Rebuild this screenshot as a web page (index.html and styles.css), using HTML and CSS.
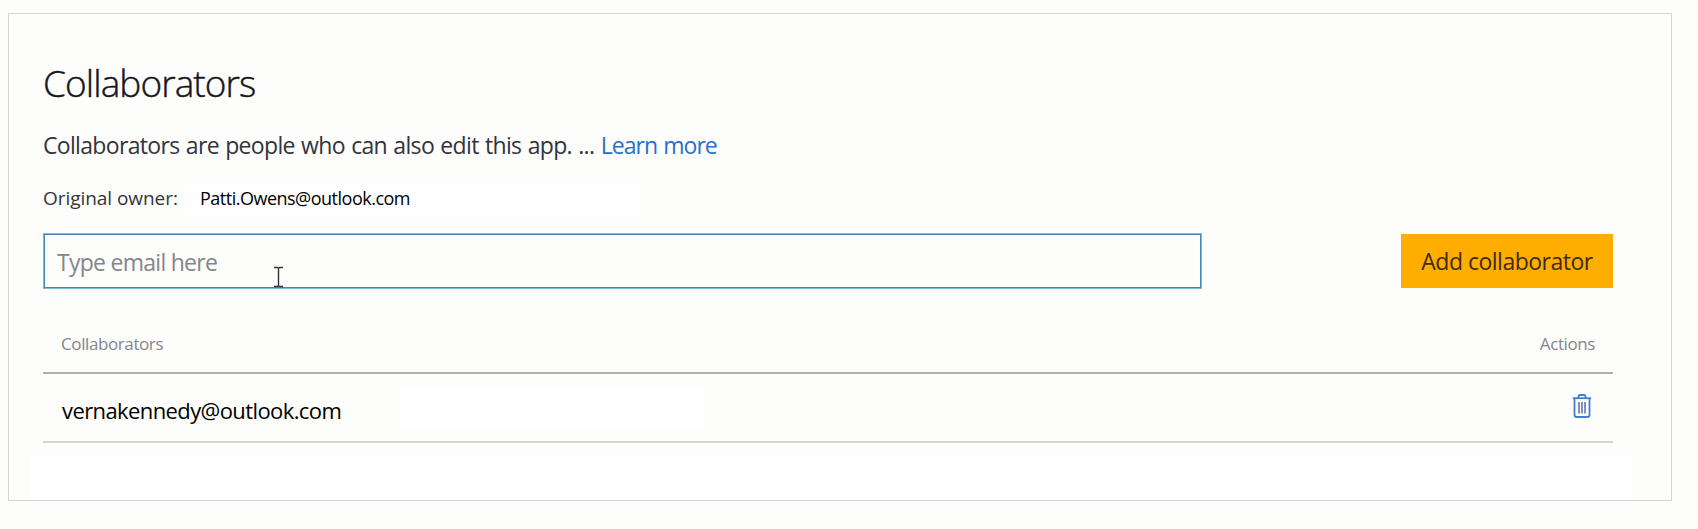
FILE: index.html
```html
<!DOCTYPE html>
<html lang="en">
<head>
<meta charset="utf-8">
<title>Collaborators</title>
<link rel="stylesheet" href="styles.css">
</head>
<body>
<main class="panel">
  <h1 class="title"><span>Collaborators</span></h1>
  <p class="intro"><span>Collaborators are people who can also edit this app. ... </span><a class="link">Learn more</a></p>
  <div class="owner"><span class="owner-label">Original owner:</span><span class="owner-box"><span class="owner-email">Patti.Owens@outlook.com</span></span></div>
  <div class="form">
    <div class="field"><span class="placeholder">Type email here</span>
      <svg class="caret" width="11" height="22" viewBox="0 0 11 22"><path d="M1 1.500h3.200l1.300.7 1.300-.7H10M1 20.500h3.200l1.300-.7 1.300.7H10M5.500 2v18" fill="none" stroke="#333" stroke-width="1.400"/></svg>
    </div>
    <button class="add"><span>Add collaborator</span></button>
  </div>
  <div class="table-head"><span class="th-name">Collaborators</span><span class="th-actions">Actions</span></div>
  <div class="table-row">
    <div class="person"><span>vernakennedy@outlook.com</span></div>
    <div class="blank"></div>
    <svg class="trash" width="20" height="26" viewBox="0 0 20 26" fill="none" stroke="#4580c4"><path d="M.8 5.200h18.400" stroke-width="1.800"/><path d="M6.500 5V3.500q0-1.500 1.500-1.500h4q1.500 0 1.500 1.500V5" stroke-width="1.800"/><path d="M2.500 5.500v16.500q0 2 2 2h11q2 0 2-2V5.500" stroke-width="1.800"/><path d="M7 9v11.500M10 9v11.500M13 9v11.500" stroke="#6472b6" stroke-width="1.600"/></svg>
  </div>
  <div class="footer-space"></div>
</main>
</body>
</html>
```
FILE: styles.css
```css
* { box-sizing: border-box; }
body { margin: 0; padding: 13px 26px 0 8px; background: #fdfdfb; font-family: "Open Sans", "Noto Sans", sans-serif; color: #33343c; }
.panel { height: 488px; border: 1px solid #d4d4d4; padding: 44px 58px 0 34px; display: flex; flex-direction: column; }
.panel > * { flex-shrink: 0; }
.title { margin: 0; font-size: 37px; line-height: 50px; font-weight: 300; color: #15161e; white-space: nowrap; letter-spacing: -0.93px; -webkit-text-stroke: 0.4px #15161e; }
.intro { margin: 21px 0 0; font-size: 23px; line-height: 32px; white-space: nowrap; letter-spacing: -0.67px; word-spacing: 1px; }
.link { color: #2a70c8; letter-spacing: -0.95px; }
.owner { display: flex; margin-top: 21px; height: 32px; line-height: 33px; font-size: 19px; white-space: nowrap; letter-spacing: -0.05px; }
.owner-label { width: 142px; }
.owner-box { width: 455px; padding-left: 15px; background: #fefefe; }
.owner-email { font-size: 18px; color: #000; letter-spacing: -0.5px; }
.form { display: flex; justify-content: space-between; align-items: flex-start; margin-top: 19px; height: 57px; }
.field { position: relative; width: 1159px; height: 56px; border: 1px solid #7dbad3; box-shadow: inset 0 0 0 1px #4488b6; padding-left: 13px; font-size: 23px; line-height: 56px; color: #85868a; letter-spacing: -0.73px; }
.caret { position: absolute; left: 229px; top: 32px; }
.add { width: 212px; height: 54px; margin-top: 1px; padding: 0; border: 0; background: #ffae00; font: 23px/54px "Open Sans", sans-serif; color: #3f2a18; letter-spacing: -0.5px; white-space: nowrap; }
.table-head { display: flex; justify-content: space-between; margin-top: 24px; height: 60px; padding: 0 18px; border-bottom: 2px solid #b0b0b0; font-size: 17px; line-height: 60px; color: #85868b; letter-spacing: -0.4px; }
.table-row { display: flex; height: 69px; padding: 10px 21px 0 5px; border-bottom: 2px solid #d4d4d4; }
.person { width: 352px; height: 45px; padding-left: 14px; font-size: 22px; line-height: 53px; color: #000; white-space: nowrap; letter-spacing: -0.6px; }
.blank { width: 305px; height: 41px; margin-top: 4px; background: #fefefe; }
.trash { margin: 9px 0 0 auto; }
.footer-space { height: 63px; margin: 14px -18px 0 -13px; background: linear-gradient(#fff 43px, #d4d4d4 43px, #d4d4d4 44px, #fff 44px); }
```
